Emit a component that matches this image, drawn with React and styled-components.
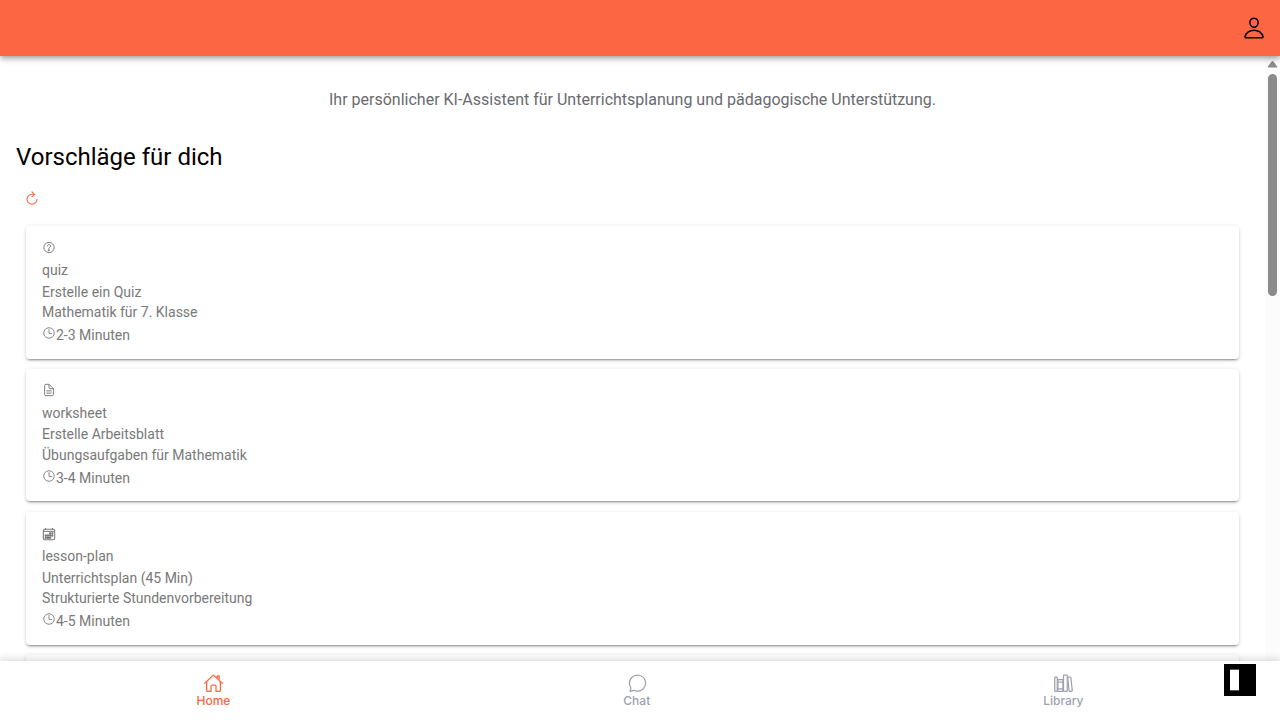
import React from 'react';
import styled, { createGlobalStyle } from 'styled-components';
import {
  IoPersonOutline, IoRefreshOutline, IoHelpCircleOutline, IoDocumentTextOutline,
  IoCalendarOutline, IoTimeOutline, IoHomeOutline, IoChatbubbleOutline, IoLibraryOutline,
} from 'react-icons/io5';

const GlobalStyle = createGlobalStyle`
  * { box-sizing: border-box; }
  body { margin: 0; background: #fff; font-family: Roboto, sans-serif; overflow: hidden; }
  svg { display: block; flex: none; }
`;
const Page = styled.div`
  height: 100vh;
  display: flex;
  flex-direction: column;
`;
const Header = styled.header`
  position: relative;
  z-index: 2;
  flex: 0 0 56px;
  display: flex;
  align-items: center;
  justify-content: flex-end;
  padding-right: 14px;
  background: #fd6643;
  box-shadow: 0 2px 4px -1px rgba(0,0,0,.2), 0 4px 5px 0 rgba(0,0,0,.14), 0 1px 10px 0 rgba(0,0,0,.12);
`;
const Body = styled.div`
  flex: 1;
  min-height: 0;
  display: flex;
`;
const Content = styled.main`
  flex: 1;
  overflow: hidden;
  padding: 32px 16px 0;
`;
const Intro = styled.p`
  margin: 0;
  color: #696a6f;
  font-size: 16px;
  line-height: 24px;
  text-align: center;
`;
const Title = styled.h2`
  margin: 31px 0 0;
  font-size: 24px;
  line-height: 29px;
  font-weight: 400;
  color: #000;
`;
const Refresh = styled.button`
  display: flex;
  align-items: center;
  height: 36px;
  margin: 8px 0 0 8px;
  padding: 0;
  border: 0;
  background: none;
  color: #fd6643;
  svg * { stroke-width: 36px; }
`;
const Cards = styled.section`
  margin-top: 10px;
`;
const Card = styled.article`
  height: ${(p) => p.$height || 133}px;
  margin: 0 10px ${(p) => 143 - (p.$height || 133)}px;
  padding: 13px 16px;
  border-radius: 4px;
  background: #fff;
  color: #797979;
  font-size: 14px;
  box-shadow: 0 3px 1px -2px rgba(0,0,0,.2), 0 2px 2px 0 rgba(0,0,0,.14), 0 1px 5px 0 rgba(0,0,0,.12);
`;
const CardIcon = styled.div`
  height: 21px;
  padding-top: ${(p) => p.$top}px;
  svg { transform: translateX(${(p) => p.$shift || 0}px); }
  svg * { stroke-width: ${(p) => p.$stroke}px; }
`;
const Line = styled.div`
  height: ${(p) => p.$height || 21}px;
  line-height: 21px;
`;
const Duration = styled.div`
  display: flex;
  padding-top: 2px;
  line-height: 21px;
  svg { margin-top: 1px; }
`;
const Scrollbar = styled.div`
  width: 15px;
  display: flex;
  flex-direction: column;
  align-items: center;
  padding-top: 4px;
  background: #fcfcfc;
`;
const Thumb = styled.div`
  width: 9px;
  height: 222px;
  margin-top: 6px;
  border-radius: 5px;
  background: #8b8b8b;
`;
const TabBar = styled.nav`
  position: relative;
  z-index: 2;
  flex: 0 0 59px;
  display: flex;
  background: #fff;
  box-shadow: 0 -2px 8px rgba(0,0,0,.15);
`;
const Tab = styled.a`
  flex: 1 1 auto;
  display: flex;
  flex-direction: column;
  align-items: center;
  padding-top: 12px;
  color: ${(p) => (p.$active ? '#fd6643' : '#9ca3af')};
  font: 500 12px/15px Inter, sans-serif;
  svg { transform: translate(.5px, .3px); }
`;
const PanelButton = styled.button`
  position: absolute;
  right: 24px;
  top: 3px;
  width: 32px;
  height: 32px;
  padding: 5px 6px;
  border: 0;
  background: #000;
`;
const PanelMark = styled.span`
  display: block;
  width: 9px;
  height: 22px;
  background: #fff;
  border: solid #555;
  border-width: 1px 0;
`;

const suggestions = [
  { Icon: IoHelpCircleOutline, type: 'quiz', title: 'Erstelle ein Quiz', text: 'Mathematik für 7. Klasse', time: '2-3 Minuten', height: 133, typeHeight: 22, iconTop: 1, iconSize: 15, shift: -0.5, stroke: 32 },
  { Icon: IoDocumentTextOutline, type: 'worksheet', title: 'Erstelle Arbeitsblatt', text: 'Übungsaufgaben für Mathematik', time: '3-4 Minuten', height: 132.4, typeHeight: 21, iconTop: 1, iconSize: 14, stroke: 36 },
  { Icon: IoCalendarOutline, type: 'lesson-plan', title: 'Unterrichtsplan (45 Min)', text: 'Strukturierte Stundenvorbereitung', time: '4-5 Minuten', height: 133, typeHeight: 22, iconTop: 2, iconSize: 14, stroke: 38 },
];
const tabs = [
  { Icon: IoHomeOutline, label: 'Home', active: true },
  { Icon: IoChatbubbleOutline, label: 'Chat' },
  { Icon: IoLibraryOutline, label: 'Library' },
];

export default function App() {
  return (
    <Page>
      <GlobalStyle />
      <Header><IoPersonOutline size={24} /></Header>
      <Body>
        <Content>
          <Intro>Ihr persönlicher KI-Assistent für Unterrichtsplanung und pädagogische Unterstützung.</Intro>
          <Title>Vorschläge für dich</Title>
          <Refresh aria-label="Aktualisieren"><IoRefreshOutline size={16} /></Refresh>
          <Cards>
            {suggestions.map(({ Icon, type, title, text, time, height, typeHeight, iconTop, iconSize, shift, stroke }) => (
              <Card key={type} $height={height}>
                <CardIcon $top={iconTop} $shift={shift} $stroke={stroke}><Icon size={iconSize} /></CardIcon>
                <Line $height={typeHeight}>{type}</Line>
                <Line $height={42 - typeHeight}>{title}</Line>
                <Line>{text}</Line>
                <Duration><IoTimeOutline size={14} />{time}</Duration>
              </Card>
            ))}
            <Card />
          </Cards>
        </Content>
        <Scrollbar>
          <svg width="11" height="8" viewBox="0 0 11 8"><path d="M5.5 1 10 7H1Z" fill="#8b8b8b" stroke="#8b8b8b" strokeLinejoin="round" /></svg>
          <Thumb />
        </Scrollbar>
      </Body>
      <TabBar>
        {tabs.map(({ Icon, label, active }) => (
          <Tab key={label} $active={active}><Icon size={20} />{label}</Tab>
        ))}
        <PanelButton aria-label="Panel"><PanelMark /></PanelButton>
      </TabBar>
    </Page>
  );
}
